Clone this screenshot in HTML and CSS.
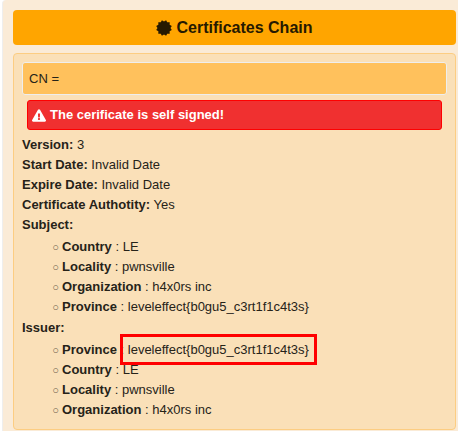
FILE: index.html
```html
<!DOCTYPE html>
<html lang="en">
<head>
<meta charset="utf-8">
<title>Certificates Chain</title>
<link rel="stylesheet" href="styles.css">
</head>
<body>
<main class="panel">
  <h1 class="title">
    <svg class="title-icon" viewBox="-8 -8 16 16" aria-hidden="true"><path d="M0-6.500 2.100-7.800 3.250-5.630 5.710-5.710 5.630-3.250 7.800-2.100 6.500 0 7.800 2.100 5.630 3.250 5.710 5.710 3.250 5.630 2.100 7.800 0 6.500-2.100 7.800-3.250 5.630-5.710 5.710-5.630 3.250-7.800 2.100-6.500 0-7.800-2.100-5.630-3.250-5.710-5.710-3.250-5.630-2.100-7.800Z"/></svg>
    Certificates Chain
  </h1>
  <section class="card">
    <div class="name">CN =</div>
    <div class="alert" role="alert">
      <svg class="alert-icon" viewBox="0 0 576 512" aria-hidden="true"><path d="M569.500 440C588 472 564.800 512 527.900 512H48.100c-36.900 0-60-40.100-41.600-72L246.400 24c18.500-32 64.700-32 83.200 0l239.900 416zM288 354c-25.400 0-46 20.600-46 46s20.600 46 46 46 46-20.600 46-46-20.600-46-46-46zm-43.700-165.300 7.400 136c.4 6.400 5.600 11.300 12 11.300h48.500c6.400 0 11.600-5 12-11.300l7.400-136c.4-6.900-5.100-12.700-12-12.700h-63.400c-6.900 0-12.300 5.800-12 12.700z"/></svg>
      The cerificate is self signed!
    </div>
    <div><b>Version:</b> 3</div>
    <div><b>Start Date:</b> Invalid Date</div>
    <div><b>Expire Date:</b> Invalid Date</div>
    <div><b>Certificate Authotity:</b> Yes</div>
    <div><b>Subject:</b></div>
    <ul class="fields">
      <li><b>Country</b> : LE</li>
      <li><b>Locality</b> : pwnsville</li>
      <li><b>Organization</b> : h4x0rs inc</li>
      <li><b>Province</b> : leveleffect{b0gu5_c3rt1f1c4t3s}</li>
    </ul>
    <div><b>Issuer:</b></div>
    <ul class="fields">
      <li><b>Province</b> : <span class="highlight">leveleffect{b0gu5_c3rt1f1c4t3s}</span></li>
      <li><b>Country</b> : LE</li>
      <li><b>Locality</b> : pwnsville</li>
      <li><b>Organization</b> : h4x0rs inc</li>
    </ul>
  </section>
</main>
</body>
</html>
```
FILE: styles.css
```css
* {
  box-sizing: border-box;
}

body {
  margin: 0;
  background: #fff;
  color: #262319;
  font-family: "Liberation Sans", Arial, sans-serif;
  font-size: 13px;
  line-height: 20px;
}

.panel {
  min-height: 100vh;
  margin-left: 2px;
  padding: 10px 2px 1px 10px;
  border-left: 1px solid #eee;
  border-top-left-radius: 4px;
  background: #faebd7;
}

.title {
  display: flex;
  align-items: center;
  justify-content: center;
  gap: 4px;
  height: 35px;
  margin: 0 0 8px;
  border-radius: 4px;
  background: #ffa500;
  color: #261900;
  font-size: 16px;
}

.title-icon {
  width: 16px;
  height: 16px;
  fill: currentColor;
}

.card {
  padding: 8px;
  border: 1px solid #fccd82;
  border-radius: 4px;
  background: #fae0b8;
}

.name {
  display: flex;
  align-items: center;
  min-height: 33px;
  padding: 0 6px;
  border: 1px solid #eee;
  border-radius: 3px;
  background: #ffc15c;
}

.alert {
  display: flex;
  align-items: center;
  gap: 4px;
  min-height: 30px;
  margin: 5px;
  padding: 0 4px;
  border: 1px solid #f00;
  border-radius: 3px;
  background: #f03030;
  color: #fff;
  font-weight: bold;
}

.alert-icon {
  width: 14px;
  height: 13px;
  fill: currentColor;
}

.fields {
  margin: 2px 0 1px;
  padding-left: 40px;
  list-style-type: "○ ";
}

.fields li::marker {
  color: #6b604d;
  font-size: 11px;
}

.highlight {
  outline: 3px solid #f00;
  outline-offset: 5px;
}
```
